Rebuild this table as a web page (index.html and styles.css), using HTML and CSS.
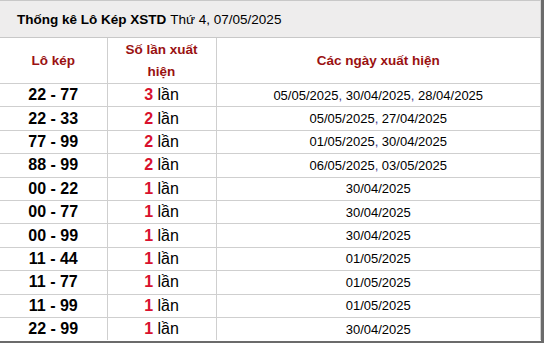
FILE: index.html
```html
<!DOCTYPE html>
<html>
<head>
<meta charset="utf-8">
<link rel="stylesheet" href="styles.css">
</head>
<body>
<div class="frame">
  <div class="title"><b>Thống kê Lô Kép XSTD</b> Thứ 4, 07/05/2025</div>
  <table class="stats">
    <colgroup><col class="c1"><col class="c2"><col class="c3"></colgroup>
    <thead>
      <tr><th>Lô kép</th><th>Số lần xuất hiện</th><th>Các ngày xuất hiện</th></tr>
    </thead>
    <tbody>
      <tr><td class="pair">22 - 77</td><td class="cnt"><span class="n">3</span> lần</td><td class="dates">05/05/2025<span class="cm">,</span> 30/04/2025<span class="cm">,</span> 28/04/2025</td></tr>
      <tr><td class="pair">22 - 33</td><td class="cnt"><span class="n">2</span> lần</td><td class="dates">05/05/2025<span class="cm">,</span> 27/04/2025</td></tr>
      <tr><td class="pair">77 - 99</td><td class="cnt"><span class="n">2</span> lần</td><td class="dates">01/05/2025<span class="cm">,</span> 30/04/2025</td></tr>
      <tr><td class="pair">88 - 99</td><td class="cnt"><span class="n">2</span> lần</td><td class="dates">06/05/2025<span class="cm">,</span> 03/05/2025</td></tr>
      <tr><td class="pair">00 - 22</td><td class="cnt"><span class="n">1</span> lần</td><td class="dates">30/04/2025</td></tr>
      <tr><td class="pair">00 - 77</td><td class="cnt"><span class="n">1</span> lần</td><td class="dates">30/04/2025</td></tr>
      <tr><td class="pair">00 - 99</td><td class="cnt"><span class="n">1</span> lần</td><td class="dates">30/04/2025</td></tr>
      <tr><td class="pair">11 - 44</td><td class="cnt"><span class="n">1</span> lần</td><td class="dates">01/05/2025</td></tr>
      <tr><td class="pair">11 - 77</td><td class="cnt"><span class="n">1</span> lần</td><td class="dates">01/05/2025</td></tr>
      <tr><td class="pair">11 - 99</td><td class="cnt"><span class="n">1</span> lần</td><td class="dates">01/05/2025</td></tr>
      <tr><td class="pair">22 - 99</td><td class="cnt"><span class="n">1</span> lần</td><td class="dates">30/04/2025</td></tr>
    </tbody>
  </table>
</div>
</body>
</html>
```
FILE: styles.css
```css
html, body { margin: 0; padding: 0; background: #fff; }
body { font-family: "Liberation Sans", Arial, sans-serif; color: #000; }
.frame {
  width: 541px;
  height: 341px;
  border-right: 3px solid #6b6b6b;
  border-bottom: 2px solid #6b6b6b;
  overflow: hidden;
}
.title {
  box-sizing: border-box;
  height: 38px;
  background: #eeeded;
  border-top: 1px solid #c8c8c8;
  border-bottom: 1px solid #c8c8c8;
  border-right: 1px solid #d4d4d4;
  padding-left: 17px;
  display: flex;
  align-items: center;
  font-size: 13.5px;
}
.title b { font-weight: bold; margin-right: 4px; }
.stats {
  width: 541px;
  border-collapse: collapse;
  table-layout: fixed;
}
.c1 { width: 107px; }
.c2 { width: 109px; }
.stats th, .stats td {
  border: 1px solid #cfcfcf;
  text-align: center;
  padding: 0;
}
.stats tr > :first-child { border-left: none; }
.stats thead tr > * { border-top: none; }
.stats th {
  height: 45px;
  color: #9a1111;
  font-size: 13.5px;
  font-weight: bold;
  line-height: 22px;
}
.stats th:nth-child(2) { padding: 0 14px; }
.stats td { height: 22.4px; }
.pair { font-weight: bold; font-size: 16px; }
.cnt { font-size: 16px; }
.n { color: #d8112d; font-weight: bold; }
.dates { font-size: 13px; }
.cm { color: #3a3a8a; }
.stats tbody tr:last-child td { border-bottom: none; }
```
